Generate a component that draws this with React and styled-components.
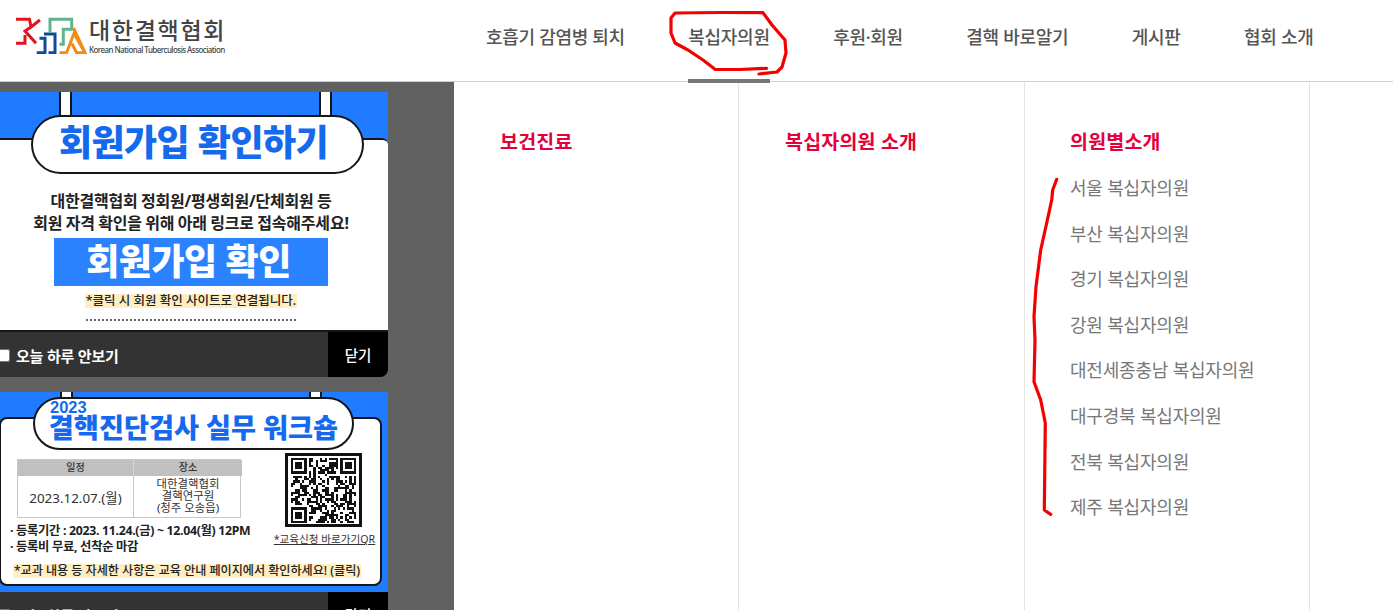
import React from 'react';
import styled, { createGlobalStyle } from 'styled-components';

const GlobalStyle = createGlobalStyle`
  html, body { margin: 0; padding: 0; background: #fff; }
  body { font-family: "Noto Sans", "Noto Sans CJK KR", sans-serif; overflow: hidden; }
  * { box-sizing: border-box; }
`;

const BLUE = '#1f7bff';
const INK = '#161616';

const navItems = ['호흡기 감염병 퇴치', '복십자의원', '후원·회원', '결핵 바로알기', '게시판', '협회 소개'];
const clinics = ['서울', '부산', '경기', '강원', '대전세종충남', '대구경북', '전북', '제주'];

// QR modules: finder corners plus seeded noise, it only has to look like the code in the banner
const QR_SIZE = 29;
function buildQr() {
  let seed = 2023;
  const next = () => {
    seed = (seed * 1103515245 + 12345) & 0x7fffffff;
    return (seed >> 12) % 100;
  };
  const inFinder = (x, y, ox, oy) => x >= ox && x < ox + 8 && y >= oy && y < oy + 8;
  const finderOn = (x, y, ox, oy) => {
    const dx = x - ox;
    const dy = y - oy;
    if (dx > 6 || dy > 6 || dx < 0 || dy < 0) return false;
    if (dx === 0 || dx === 6 || dy === 0 || dy === 6) return true;
    return dx >= 2 && dx <= 4 && dy >= 2 && dy <= 4;
  };
  const origins = [[0, 0], [QR_SIZE - 7, 0], [0, QR_SIZE - 7]];
  let d = '';
  for (let y = 0; y < QR_SIZE; y++) {
    for (let x = 0; x < QR_SIZE; x++) {
      let on = next() > 50;
      origins.forEach(([ox, oy]) => {
        const fx = ox === 0 ? 0 : ox - 1;
        const fy = oy === 0 ? 0 : oy - 1;
        if (inFinder(x, y, fx, fy)) on = finderOn(x, y, ox, oy);
      });
      if (on) d += `M${x} ${y}h1v1h-1z`;
    }
  }
  return d;
}
const qrPath = buildQr();

function App() {
  return (
    <Page>
      <GlobalStyle />
      <Header>
        <Logo>
          <LogoMark viewBox="0 0 72 38" aria-hidden="true">
            <path d="M0 3.3H13.5L15 11L24 4M15 11L9 15L20 27.3M0 27.3H9V19" stroke="#e1141e" />
            <path d="M20.7 36.7H29V22.3H23.5M32.5 36.7H39V18H28" stroke="#0f4a9c" />
            <path d="M34 17V3.3H55.7V13.3H47.3V28.3H43.5" stroke="#5fb48a" />
            <path d="M43.5 36.7H50.5L58 17.5L69 36.7H60.5L56 27.5M57.5 12L69 36.7" stroke="#f28c14" />
          </LogoMark>
          <LogoText>
            <LogoTitle>대한결핵협회</LogoTitle>
            <LogoSub>Korean National Tuberculosis Association</LogoSub>
          </LogoText>
        </Logo>
        <Nav>
          {navItems.map((item) => (
            <NavItem key={item} $active={item === '복십자의원'}>{item}</NavItem>
          ))}
        </Nav>
      </Header>

      <Body>
        <PopupPanel>
          <Popup>
            <BannerOne>
              <Sheet $flat>
                <Pill $width={333} $height={59} $left={37} $overlap={25} $postLeft={26} $postRight={30} $postHeight={23}>
                  <PillTitle>회원가입 확인하기</PillTitle>
                </Pill>
                <Intro>
                  대한결핵협회 정회원/평생회원/단체회원 등<br />
                  회원 자격 확인을 위해 아래 링크로 접속해주세요!
                </Intro>
                <JoinButton>회원가입 확인</JoinButton>
                <Highlight $size={12.5} $top={8}>*클릭 시 회원 확인 사이트로 연결됩니다.</Highlight>
                <Dots />
              </Sheet>
            </BannerOne>
            <PopupFooter />
          </Popup>

          <Popup>
            <BannerTwo>
              <Sheet>
                <Pill $width={321} $height={53} $left={32} $overlap={22} $postLeft={25} $postRight={30} $postHeight={5}>
                  <PillYear>2023</PillYear>
                  <PillHeading>결핵진단검사 실무 워크숍</PillHeading>
                </Pill>
                <InfoRow>
                  <InfoLeft>
                    <Schedule>
                      <ScheduleHead>일정</ScheduleHead>
                      <ScheduleHead>장소</ScheduleHead>
                      <ScheduleDate>2023.12.07.(월)</ScheduleDate>
                      <SchedulePlace>대한결핵협회<br />결핵연구원<br />(청주 오송읍)</SchedulePlace>
                    </Schedule>
                    <Terms>
                      · 등록기간 : 2023. 11.24.(금) ~ 12.04(월) 12PM<br />
                      · 등록비 무료, 선착순 마감
                    </Terms>
                  </InfoLeft>
                  <QrBlock>
                    <QrFrame>
                      <svg viewBox={`0 0 ${QR_SIZE} ${QR_SIZE}`} width="65" height="65" shapeRendering="crispEdges">
                        <path d={qrPath} fill="#111" />
                      </svg>
                    </QrFrame>
                    <QrCaption>*교육신청 바로가기QR</QrCaption>
                  </QrBlock>
                </InfoRow>
                <Highlight $size={12.1} $top={9} $right={7}>*교과 내용 등 자세한 사항은 교육 안내 페이지에서 확인하세요! (클릭)</Highlight>
              </Sheet>
            </BannerTwo>
            <PopupFooter />
          </Popup>
        </PopupPanel>

        <MegaMenu>
          <MenuColumn><MenuTitle>보건진료</MenuTitle></MenuColumn>
          <MenuColumn><MenuTitle>복십자의원 소개</MenuTitle></MenuColumn>
          <MenuColumn $inset={45}>
            <MenuTitle>의원별소개</MenuTitle>
            <MenuList>
              {clinics.map((name) => <li key={name}>{name} 복십자의원</li>)}
            </MenuList>
          </MenuColumn>
          <MenuColumn $last />
        </MegaMenu>
      </Body>

      {/* red pen marks drawn over the screenshot */}
      <PenMarks viewBox="0 0 1393 610" aria-hidden="true">
        <path d="M766.7 68.3L740 69.5L715 69.3L703 60L688 50L675 43L671 33L671 18L675 13L720 12.5L763 12.7L772 25L785 40L786 53L782 67L777 72L759 74" />
        <path d="M1056.7 179.3L1052.7 190L1051.7 200L1046.7 223L1040.7 250L1036 286.7L1034 316.7L1035 340L1034 381.7L1040.7 400L1045.3 423L1044.3 510L1050.7 514.3" />
      </PenMarks>
    </Page>
  );
}

function PopupFooter() {
  return (
    <Footer>
      <HideToday>
        <HideCheck type="checkbox" />
        오늘 하루 안보기
      </HideToday>
      <CloseButton>닫기</CloseButton>
    </Footer>
  );
}

const Page = styled.div`
  position: relative;
  width: 1393px;
  height: 610px;
  overflow: hidden;
  display: flex;
  flex-direction: column;
`;

const Header = styled.header`
  height: 82px;
  flex: none;
  display: flex;
  padding-left: 16px;
  border-bottom: 1px solid #cfcfcf;
`;

const Logo = styled.div`
  width: 470px;
  display: flex;
  align-items: flex-start;
  padding-top: 16px;
`;

const LogoMark = styled.svg`
  width: 72px;
  height: 38px;
  flex: none;
  fill: none;
  stroke-width: 3;
`;

const LogoText = styled.div`
  margin-left: 1px;
  display: flex;
  flex-direction: column;
`;

const LogoTitle = styled.div`
  font-size: 23px;
  line-height: 26px;
  margin-top: 1px;
  font-weight: 500;
  letter-spacing: 1.7px;
  color: #444;
`;

const LogoSub = styled.div`
  font-size: 8px;
  line-height: 10px;
  margin-top: 2px;
  font-weight: 500;
  letter-spacing: -0.55px;
  color: #444;
  white-space: nowrap;
`;

const Nav = styled.nav`
  display: flex;
  gap: 63.5px;
`;

const NavItem = styled.div`
  position: relative;
  height: 82px;
  padding-bottom: 11px;
  display: flex;
  align-items: center;
  font-size: 18px;
  font-weight: 500;
  letter-spacing: -0.3px;
  color: #555;
  white-space: nowrap;

  &::after {
    content: "";
    display: ${(p) => (p.$active ? 'block' : 'none')};
    position: absolute;
    left: 0;
    right: 0;
    bottom: -1px;
    height: 4px;
    background: #777;
  }
`;

const Body = styled.div`
  flex: 1;
  display: flex;
  min-height: 0;
`;

const PopupPanel = styled.div`
  width: 454px;
  flex: none;
  background: #616161;
  padding: 10px 0 0;
  display: flex;
  flex-direction: column;
  gap: 15px;
  overflow: hidden;
`;

const Popup = styled.div`
  width: 394px;
  margin-left: -6px;
  flex: none;
`;

const BannerOne = styled.div`
  height: 240px;
  padding-top: 46px;
  background: ${BLUE};
`;

const BannerTwo = styled.div`
  height: 200px;
  padding: 25px 6px 6px 5px;
  background: ${BLUE};
`;

const Sheet = styled.div`
  height: 100%;
  display: flex;
  flex-direction: column;
  align-items: center;
  background: #fff;
  border: 2px solid ${INK};
  border-width: ${(p) => (p.$flat ? '2px 0' : '2px')};
  border-radius: ${(p) => (p.$flat ? '0 6px 0 0' : '8px')};
`;

const Pill = styled.div`
  position: relative;
  flex: none;
  align-self: flex-start;
  width: ${(p) => p.$width}px;
  height: ${(p) => p.$height}px;
  margin-left: ${(p) => p.$left}px;
  margin-top: -${(p) => p.$overlap}px;
  background: #fff;
  border: 2px solid ${INK};
  border-radius: 30px;
  padding-bottom: 4px;
  display: flex;
  flex-direction: column;
  align-items: center;
  justify-content: center;

  &::before, &::after {
    content: "";
    position: absolute;
    top: -${(p) => p.$postHeight + 2}px;
    width: 9px;
    height: ${(p) => p.$postHeight}px;
    background: #fff;
    border: 1px solid ${INK};
    border-width: 0 2px;
  }
  &::before { left: ${(p) => p.$postLeft}px; }
  &::after { right: ${(p) => p.$postRight}px; }
`;

const PillTitle = styled.div`
  font-size: 36px;
  line-height: 40px;
  padding-right: 8px;
  font-weight: 900;
  letter-spacing: -0.6px;
  color: #1469ee;
  white-space: nowrap;
`;

const PillYear = styled.div`
  align-self: flex-start;
  margin-left: 15px;
  font-family: "Liberation Sans", sans-serif;
  font-size: 16.5px;
  line-height: 13px;
  font-weight: 700;
  color: #1469ee;
`;

const PillHeading = styled.div`
  font-size: 27.2px;
  line-height: 28px;
  font-weight: 900;
  color: #1469ee;
  white-space: nowrap;
`;

const Intro = styled.div`
  margin-top: 16px;
  font-size: 16px;
  line-height: 22px;
  font-weight: 700;
  letter-spacing: -0.2px;
  word-spacing: -0.5px;
  text-align: center;
  color: #222;
  white-space: nowrap;
`;

const JoinButton = styled.div`
  width: 274px;
  height: 48px;
  margin-top: 4px;
  padding: 0 5px 5px 0;
  background: #2a82ff;
  display: flex;
  align-items: center;
  justify-content: center;
  font-size: 36px;
  font-weight: 900;
  letter-spacing: -0.5px;
  color: #fff;
`;

const Highlight = styled.div`
  margin-top: ${(p) => p.$top}px;
  margin-right: ${(p) => p.$right || 0}px;
  padding: 0 1px;
  background: #ffeec2;
  font-size: ${(p) => p.$size}px;
  line-height: 14px;
  font-weight: 500;
  color: #222;
  white-space: nowrap;
`;

const Dots = styled.div`
  width: 210px;
  margin-top: 11px;
  border-top: 2px dotted #666;
`;

const InfoRow = styled.div`
  align-self: stretch;
  display: flex;
  margin-top: 3px;
  padding-left: 4px;
`;

const InfoLeft = styled.div`
  width: 268px;
  padding-top: 6px;
`;

const Schedule = styled.div`
  margin-left: 12px;
  width: 224px;
  display: grid;
  grid-template-columns: 115px 109px;
  grid-template-rows: 16px 41px;
  border: 1px solid #c8c8c8;
  text-align: center;
  color: #333;
`;

const ScheduleHead = styled.div`
  background: #c0c0c0;
  font-size: 10px;
  line-height: 15px;
  font-weight: 500;
  & + & { border-left: 1px solid #d6d6d6; }
`;

const ScheduleDate = styled.div`
  display: flex;
  align-items: center;
  justify-content: center;
  font-size: 13.4px;
`;

const SchedulePlace = styled.div`
  border-left: 1px solid #c8c8c8;
  padding-top: 2px;
  font-size: 11.4px;
  line-height: 12px;
`;

const Terms = styled.div`
  margin: 5px 0 0 5px;
  font-size: 12.3px;
  line-height: 16px;
  font-weight: 700;
  letter-spacing: -0.3px;
  color: #222;
  white-space: nowrap;
`;

const QrBlock = styled.div`
  display: flex;
  flex-direction: column;
  align-items: center;
  width: 100px;
`;

const QrFrame = styled.div`
  width: 77px;
  height: 74px;
  border: 3px solid #111;
  display: flex;
  align-items: center;
  justify-content: center;
`;

const QrCaption = styled.div`
  margin: 5px 0 0 3px;
  font-size: 10.6px;
  line-height: 14px;
  text-decoration: underline;
  color: #333;
  white-space: nowrap;
`;

const Footer = styled.div`
  height: 45px;
  display: flex;
  background: #333;
  border-radius: 0 0 8px 8px;
  overflow: hidden;
`;

const HideToday = styled.label`
  flex: 1;
  display: flex;
  align-items: center;
  gap: 6px;
  padding: 2px 0 0 3px;
  font-size: 15px;
  font-weight: 700;
  letter-spacing: -0.2px;
  color: #fff;
`;

const HideCheck = styled.input`
  width: 13px;
  height: 13px;
  margin: 0;
`;

const CloseButton = styled.div`
  width: 60px;
  background: #000;
  display: flex;
  align-items: center;
  justify-content: center;
  font-size: 14.5px;
  font-weight: 500;
  color: #fff;
`;

const MegaMenu = styled.div`
  flex: 1;
  display: grid;
  grid-template-columns: 285px 286px 285px 1fr;
`;

const MenuColumn = styled.div`
  padding: 47px 0 0 ${(p) => p.$inset || 46}px;
  border-right: ${(p) => (p.$last ? 'none' : '1px solid #e4e4e4')};
`;

const MenuTitle = styled.div`
  font-size: 19.5px;
  line-height: 26px;
  font-weight: 700;
  letter-spacing: 0.2px;
  color: #e4003a;
`;

const MenuList = styled.ul`
  list-style: none;
  margin: 11px 0 0;
  padding: 0;

  li {
    font-size: 18px;
    line-height: 45.6px;
    letter-spacing: -0.2px;
    color: #777;
    white-space: nowrap;
  }
`;

const PenMarks = styled.svg`
  position: absolute;
  left: 0;
  top: 0;
  width: 1393px;
  height: 610px;
  pointer-events: none;
  fill: none;
  stroke: #f40000;
  stroke-width: 3.2;
  stroke-linejoin: round;
  stroke-linecap: round;
`;

export default App;
